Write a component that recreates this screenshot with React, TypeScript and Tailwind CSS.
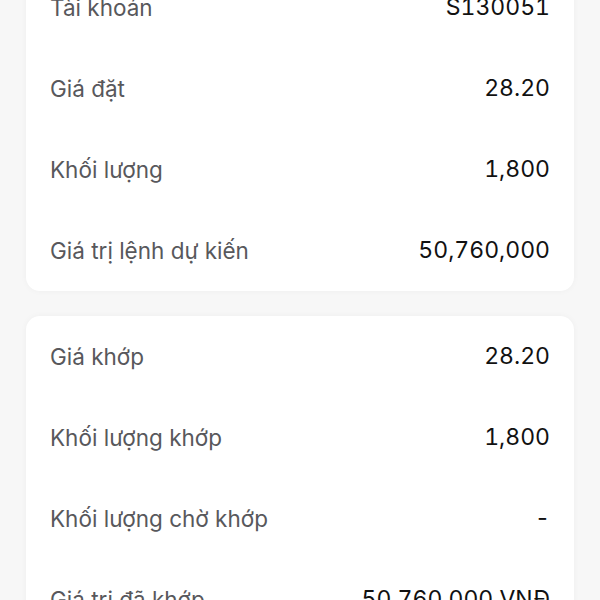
const orderRows = [
  { label: "Tài khoản", value: "S130051" },
  { label: "Giá đặt", value: "28.20" },
  { label: "Khối lượng", value: "1,800" },
  { label: "Giá trị lệnh dự kiến", value: "50,760,000" },
];

const matchRows = [
  { label: "Giá khớp", value: "28.20" },
  { label: "Khối lượng khớp", value: "1,800" },
  { label: "Khối lượng chờ khớp", value: "-" },
  { label: "Giá trị đã khớp", value: "50,760,000 VNĐ" },
];

function Row({ label, value }: { label: string; value: string }) {
  return (
    <div className="flex h-[81px] items-center justify-between">
      <span className="text-[22.5px] text-[#58585c]">{label}</span>
      <span className="text-[23px] tabular-nums text-[#111111]">{value}</span>
    </div>
  );
}

function Card({ rows }: { rows: { label: string; value: string }[] }) {
  return (
    <div className="rounded-[14px] bg-white px-6 shadow-[0_0_6px_rgba(0,0,0,0.04)]">
      {rows.map((r) => (
        <Row key={r.label} label={r.label} value={r.value} />
      ))}
    </div>
  );
}

export default function App() {
  return (
    <div
      className="h-[600px] overflow-hidden bg-[#f7f7f7] px-[26px]"
      style={{ fontFamily: "Inter, 'Noto Sans', sans-serif" }}
    >
      <div className="-mt-[33px] flex flex-col gap-[25px]">
        <Card rows={orderRows} />
        <Card rows={matchRows} />
      </div>
    </div>
  );
}
